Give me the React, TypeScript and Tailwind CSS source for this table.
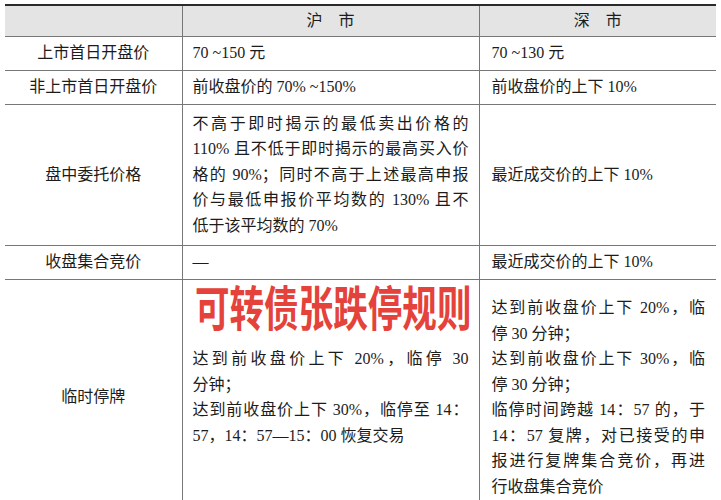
const FONT = "font-['Liberation_Serif','Noto_Sans_CJK_SC',serif]";

type Line = { text: string; justify?: boolean };

function Lines({ lines }: { lines: Line[] }) {
  return (
    <div>
      {lines.map((l, i) => (
        <div
          key={i}
          className={
            l.justify
              ? "whitespace-nowrap text-justify [text-align-last:justify]"
              : "whitespace-nowrap text-left"
          }
        >
          {l.text}
        </div>
      ))}
    </div>
  );
}

const midRow3: Line[] = [
  { text: "不高于即时揭示的最低卖出价格的", justify: true },
  { text: "110% 且不低于即时揭示的最高买入价", justify: true },
  { text: "格的 90%；同时不高于上述最高申报", justify: true },
  { text: "价与最低申报价平均数的 130% 且不", justify: true },
  { text: "低于该平均数的 70%" },
];

const midRow5: Line[] = [
  { text: "达到前收盘价上下 20%，临停 30", justify: true },
  { text: "分钟；" },
  { text: "达到前收盘价上下 30%，临停至 14：", justify: true },
  { text: "57，14：57—15：00 恢复交易" },
];

const rightRow5: Line[] = [
  { text: "达到前收盘价上下 20%，临", justify: true },
  { text: "停 30 分钟；" },
  { text: "达到前收盘价上下 30%，临", justify: true },
  { text: "停 30 分钟；" },
  { text: "临停时间跨越 14：57 的，于", justify: true },
  { text: "14：57 复牌，对已接受的申", justify: true },
  { text: "报进行复牌集合竞价，再进", justify: true },
  { text: "行收盘集合竞价" },
];

export default function App() {
  const label = "border-r border-b border-[#777] text-center align-middle";
  const mid = "border-r border-b border-[#777] pl-[10px] pr-[10px] align-middle";
  const right = "border-b border-[#777] pl-[12px] pr-[11px] align-middle";

  return (
    <div className={`w-[721px] h-[500px] overflow-hidden bg-white pt-[4px] ${FONT} text-[16px] leading-[25.5px] text-[#1c1c1c]`}>
      <table className="ml-[5px] w-[711px] table-fixed border-collapse border-t-2 border-[#2a2a2a]">
        <colgroup>
          <col className="w-[177px]" />
          <col className="w-[297px]" />
          <col className="w-[237px]" />
        </colgroup>
        <tbody>
          <tr className="h-[31px] bg-[#e4e4e4]">
            <td className="border-r border-b border-[#777]"></td>
            <td className="border-r border-b border-[#777] text-center align-middle">沪　市</td>
            <td className="border-b border-[#777] text-center align-middle">深　市</td>
          </tr>
          <tr className="h-[34px]">
            <td className={label}>上市首日开盘价</td>
            <td className={mid}>70 ~150 元</td>
            <td className={right}>70 ~130 元</td>
          </tr>
          <tr className="h-[34px]">
            <td className={label}>非上市首日开盘价</td>
            <td className={mid}>前收盘价的 70% ~150%</td>
            <td className={right}>前收盘价的上下 10%</td>
          </tr>
          <tr className="h-[141px]">
            <td className={label}>盘中委托价格</td>
            <td className={mid}>
              <Lines lines={midRow3} />
            </td>
            <td className={right}>最近成交价的上下 10%</td>
          </tr>
          <tr className="h-[34px]">
            <td className={label}>收盘集合竞价</td>
            <td className={mid}>—</td>
            <td className={right}>最近成交价的上下 10%</td>
          </tr>
          <tr className="h-[236px]">
            <td className={label}>临时停牌</td>
            <td className={`${mid} relative`}>
              <div className="absolute left-[12px] top-[-2px] origin-left scale-x-[0.72] whitespace-nowrap font-['Noto_Sans_CJK_SC',sans-serif] text-[48px] font-bold leading-[54px] text-[#e4423b]">
                可转债张跌停规则
              </div>
              <Lines lines={midRow5} />
            </td>
            <td className={right}>
              <Lines lines={rightRow5} />
            </td>
          </tr>
        </tbody>
      </table>
    </div>
  );
}
